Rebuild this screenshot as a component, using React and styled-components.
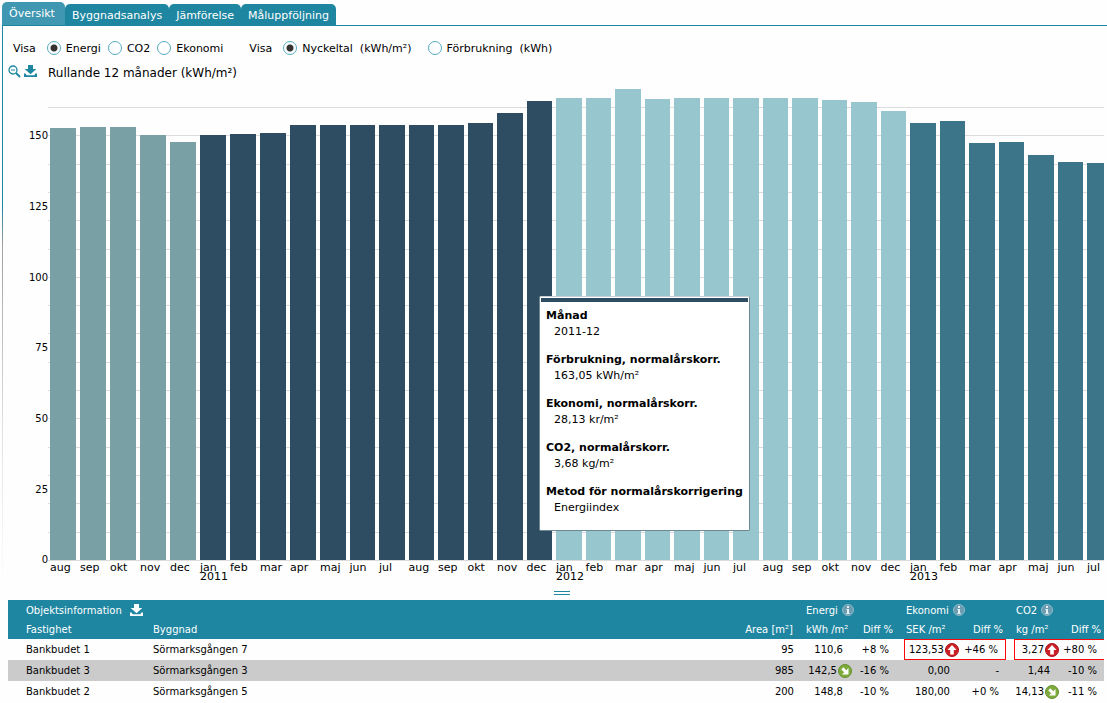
import React, { useState } from 'react';
import styled, { createGlobalStyle, css } from 'styled-components';

const colors = {
  teal: '#1e86a1',
  tealLight: '#3f97b1',
  y2010: '#78a0a5',
  y2011: '#2e4d62',
  y2012: '#98c6cf',
  y2013: '#3c758a',
  grid: '#dcdcdc',
  alert: '#fa0a0a',
};

const GlobalStyle = createGlobalStyle`
  * {
    box-sizing: border-box;
  }

  body {
    margin: 0;
    background: #fefefe;
    color: #000;
    font-family: Verdana, 'DejaVu Sans', sans-serif;
    font-size: 11px;
  }
`;

const Page = styled.div`
  padding-left: 2px;
`;

const Tabs = styled.nav`
  display: flex;
  align-items: flex-end;
  height: 25px;
`;

const Tab = styled.a`
  height: ${({ $active }) => ($active ? '23px' : '21px')};
  padding: 0 ${({ $active }) => ($active ? '10px' : '7px')} 0 7px;
  border-radius: 5px 5px 0 0;
  background: ${({ $active }) => ($active ? colors.tealLight : colors.teal)};
  color: #fff;
  line-height: 23px;
  text-decoration: none;
  white-space: nowrap;
`;

const Panel = styled.main`
  padding: 12px 3px 0 6px;
  border-top: 1px solid ${colors.teal};
  background: linear-gradient(
      to bottom,
      ${colors.teal} 180px,
      #a0a0a0 220px,
      #e0e0e0 400px,
      #fefefe 560px
    ) left top / 1px 100% no-repeat;
`;

const Controls = styled.div`
  display: flex;
  align-items: center;
  gap: 26px;
  padding-left: 5px;
`;

const RadioGroup = styled.fieldset`
  display: flex;
  align-items: center;
  gap: 11px;
  height: 20px;
  margin: 0;
  padding: 0;
  border: 0;
`;

const Options = styled.div`
  display: flex;
  gap: ${({ $wide }) => ($wide ? '16px' : '7px')};
`;

const RadioLabel = styled.label`
  display: flex;
  align-items: center;
  gap: 5px;
  white-space: pre;
`;

const Radio = styled.input`
  appearance: none;
  width: 14px;
  height: 14px;
  margin: 0;
  border: 1px solid #55a9c2;
  border-radius: 50%;
  background: #fff;

  &:checked {
    background: radial-gradient(circle, #333 3px, #fff 4px);
  }
`;

const TitleRow = styled.div`
  display: flex;
  align-items: center;
  height: 27px;
  padding-top: 2px;
`;

const IconButton = styled.button`
  display: inline-flex;
  margin: 0;
  padding: 0;
  border: 0;
  background: none;
  color: inherit;
  cursor: pointer;
`;

const TitleTools = styled.div`
  display: flex;
  gap: 3px;
  width: 40px;
  height: 16px;
  color: ${colors.teal};
`;

const ChartTitle = styled.h1`
  margin: 0;
  font-size: 12px;
  font-weight: normal;
`;

const Chart = styled.section`
  display: grid;
  grid-template-columns: 40px minmax(0, 1fr);
  grid-template-rows: 475px auto;
`;

const ValueAxis = styled.div`
  display: flex;
  flex-direction: column;
  justify-content: space-between;
  align-self: end;
  height: calc(100% * 150 / 168);
  font-size: 10px;
`;

const ValueLabel = styled.span`
  display: flex;
  align-items: center;
  justify-content: flex-end;
  height: 0;
`;

const Plot = styled.div`
  display: grid;
  position: relative;
  min-width: 0;

  > * {
    grid-area: 1 / 1;
  }
`;

const GridLines = styled.div`
  display: flex;
  flex-direction: column;
`;

const GridBand = styled.div`
  flex: ${({ $units }) => $units} 0 0;
  border-bottom: ${({ $line }) => ($line ? `1px solid ${colors.grid}` : '0')};
`;

const Clip = styled.div`
  min-width: 0;
  overflow: hidden;
`;

// the oldest months get slightly wider slots, the newest one runs off the edge
const Columns = styled.div`
  display: grid;
  grid-template-columns: repeat(9, minmax(0, 60fr)) repeat(27, minmax(0, 59fr));
  align-items: end;
  width: 101%;
  height: 100%;
`;

const BarSlot = styled.div`
  display: flex;
  align-items: flex-end;
  height: 100%;
  padding: 0 2px;
`;

const Bar = styled.div`
  width: 100%;
  background: ${({ $year }) => colors[`y${$year}`]};
`;

const MonthAxis = styled(Clip)`
  grid-column: 2;
  height: 27px;
  padding-top: 2px;
  border-top: 1px solid ${colors.grid};
`;

const Month = styled.div`
  height: 24px;
  padding-left: 2px;
  line-height: 9px;
  white-space: nowrap;
`;

const Tooltip = styled.dl`
  position: absolute;
  top: 211px;
  left: 46.5%;
  z-index: 1;
  margin: 0;
  padding: 1px;
  border: 1px solid #6d8793;
  border-top-color: #c5d0d5;
  border-radius: 2px;
  background: #fff;
  line-height: 16px;
  white-space: nowrap;

  &::before {
    content: '';
    display: block;
    height: 4px;
    background: ${colors.y2011};
  }
`;

const TooltipBody = styled.div`
  padding: 6px 5px 1px;
`;

const TooltipItem = styled.div`
  margin-bottom: 12px;

  dt {
    font-weight: bold;
  }

  dd {
    margin: 0 0 0 8px;
  }
`;

const Splitter = styled.div`
  width: 16px;
  height: 4px;
  margin: 4px 0 5px calc(50% - 2px);
  border: solid ${colors.teal};
  border-width: 1px 0;
`;

const Table = styled.table`
  width: 100%;
  border-collapse: separate;
  border-spacing: 0;
  table-layout: fixed;
  font-size: 10px;
  white-space: nowrap;
`;

const Head = styled.thead`
  background: ${colors.teal};
  color: #fff;
`;

const HeadCell = styled.th`
  height: ${({ $low }) => ($low ? '19px' : '20px')};
  padding: ${({ $first }) => ($first ? '0 0 0 18px' : $first === false ? '0' : '0 3px 0 2px')};
  font-weight: normal;
  text-align: ${({ $right }) => ($right ? 'right' : 'left')};
`;

const HeadGroup = styled.span`
  display: flex;
  align-items: center;
  gap: ${({ $gap }) => $gap || 4}px;
`;

const Row = styled.tr`
  background: ${({ $shaded }) => ($shaded ? '#cbcbcb' : 'transparent')};
`;

const alertEdge = `1px solid ${colors.alert}`;

const Cell = styled.td`
  height: 21px;
  padding: 0 ${({ $pad }) => $pad || 0}px 0 ${({ $first }) => ($first ? 18 : 0)}px;
  text-align: ${({ $right }) => ($right ? 'right' : 'left')};

  ${({ $alert }) => $alert && css`
    border-top: ${alertEdge};
    border-bottom: ${alertEdge};
  `}
  ${({ $alert }) => $alert === 'start' && css`
    border-left: ${alertEdge};
  `}
  ${({ $alert }) => $alert === 'end' && css`
    border-right: ${alertEdge};
  `}
`;

const Value = styled.span`
  display: flex;
  align-items: center;
  justify-content: flex-end;
  gap: 1px;
`;

const ZoomOutIcon = () => (
  <svg width="13" height="13" viewBox="0 0 13 13" fill="none" stroke="currentColor">
    <circle cx="5" cy="5" r="4" strokeWidth="1.3" />
    <path d="M3 5h4" />
    <path d="M8 8l4 4" strokeWidth="2" />
  </svg>
);

const DownloadIcon = () => (
  <svg width="13" height="13" viewBox="0 0 13 13" fill="currentColor">
    <path d="M4 0h5v4h3.300L6.500 9.300.7 4H4z" />
    <path d="M0 8.500h1.500l1.200 1.700h7.600l1.200-1.700H13V12H0z" />
  </svg>
);

const InfoIcon = () => (
  <svg width="12" height="12" viewBox="0 0 12 12">
    <circle cx="6" cy="6" r="5.500" fill="#6b9cb0" stroke="#8bb9c9" />
    <path d="M5 2h2v2H5zM4.500 5H7v4h.8v1H4.200V9H5V6h-.5z" fill="#e3f0f4" />
  </svg>
);

const UpIcon = () => (
  <svg width="14" height="14" viewBox="0 0 14 14">
    <circle cx="7" cy="7" r="6.500" fill="#cc2027" stroke="#a5151b" />
    <path d="M7 2l4.500 5H8.800v4.500H5.200V7H2.500z" fill="#fff" />
  </svg>
);

const DownIcon = () => (
  <svg width="14" height="14" viewBox="0 0 14 14">
    <circle cx="7" cy="7" r="6.500" fill="#7eaa3c" stroke="#64902b" />
    <path d="M10.500 4v6.500H4l2.200-2.200L3.300 5.400l2.100-2.100 2.900 2.900z" fill="#fff" />
  </svg>
);

const MAX = 168;
const names = ['jan', 'feb', 'mar', 'apr', 'maj', 'jun', 'jul', 'aug', 'sep', 'okt', 'nov', 'dec'];

const series = [
  { year: 2010, from: 7, values: [152.8, 153.2, 153.2, 150.4, 147.9] },
  { year: 2011, from: 0, values: [150.4, 150.7, 151.1, 153.9, 153.9, 153.9, 153.9, 153.9, 153.9, 154.6, 158.1, 162.4] },
  { year: 2012, from: 0, values: [163.4, 163.4, 166.6, 163.1, 163.4, 163.4, 163.4, 163.4, 163.4, 162.7, 162, 158.8] },
  { year: 2013, from: 0, values: [154.6, 155.3, 147.5, 147.9, 143.3, 140.8, 140.4] },
];

const months = series.flatMap(({ year, from, values }) =>
  values.map((value, i) => ({ year, value, name: names[from + i], isFirst: from + i === 0 }))
);

const tooltip = [
  ['Månad', '2011-12'],
  ['Förbrukning, normalårskorr.', '163,05 kWh/m²'],
  ['Ekonomi, normalårskorr.', '28,13 kr/m²'],
  ['CO2, normalårskorr.', '3,68 kg/m²'],
  ['Metod för normalårskorrigering', 'Energiindex'],
];

const objects = [
  {
    property: 'Bankbudet 1',
    building: 'Sörmarksgången 7',
    area: '95',
    energy: { value: '110,6', diff: '+8 %' },
    economy: { value: '123,53', diff: '+46 %', trend: 'up' },
    co2: { value: '3,27', diff: '+80 %', trend: 'up' },
  },
  {
    property: 'Bankbudet 3',
    building: 'Sörmarksgången 3',
    area: '985',
    energy: { value: '142,5', diff: '-16 %', trend: 'down' },
    economy: { value: '0,00', diff: '-' },
    co2: { value: '1,44', diff: '-10 %' },
  },
  {
    property: 'Bankbudet 2',
    building: 'Sörmarksgången 5',
    area: '200',
    energy: { value: '148,8', diff: '-10 %' },
    economy: { value: '180,00', diff: '+0 %' },
    co2: { value: '14,13', diff: '-11 %', trend: 'down' },
  },
];

const Option = ({ name, value, current, onChange, children }) => (
  <RadioLabel>
    <Radio
      type="radio"
      name={name}
      checked={current === value}
      onChange={() => onChange(value)}
    />
    {children}
  </RadioLabel>
);

const Measure = ({ data, last }) => (
  <>
    <Cell />
    <Cell $right $pad={data.trend ? 3 : 12} $alert={data.trend === 'up' && 'start'}>
      <Value>
        {data.value}
        {data.trend === 'up' && <UpIcon />}
        {data.trend === 'down' && <DownIcon />}
      </Value>
    </Cell>
    <Cell $right $pad={7} $alert={data.trend === 'up' && (last ? 'middle' : 'end')}>
      {data.diff}
    </Cell>
  </>
);

const EnergyChart = () => (
  <Chart>
    <ValueAxis>
      {[150, 125, 100, 75, 50, 25, 0].map((v) => (
        <ValueLabel key={v}>{v}</ValueLabel>
      ))}
    </ValueAxis>
    <Plot>
      <GridLines>
        <GridBand $units={8} $line />
        {Array.from({ length: 16 }, (_, i) => (
          <GridBand key={i} $units={10} $line={i < 15} />
        ))}
      </GridLines>
      <Clip>
        <Columns>
          {months.map((m) => (
            <BarSlot key={`${m.year}-${m.name}`}>
              <Bar $year={m.year} style={{ height: `${(m.value / MAX) * 100}%` }} />
            </BarSlot>
          ))}
        </Columns>
      </Clip>
      <Tooltip>
        <TooltipBody>
          {tooltip.map(([term, text]) => (
            <TooltipItem key={term}>
              <dt>{term}</dt>
              <dd>{text}</dd>
            </TooltipItem>
          ))}
        </TooltipBody>
      </Tooltip>
    </Plot>
    <MonthAxis>
      <Columns>
        {months.map((m) => (
          <Month key={`${m.year}-${m.name}`}>
            <div>{m.name}</div>
            {m.isFirst && <div>{m.year}</div>}
          </Month>
        ))}
      </Columns>
    </MonthAxis>
  </Chart>
);

const ObjectTable = () => (
  <Table>
    <colgroup>
      <col style={{ width: 145 }} />
      <col />
      <col style={{ width: 64 }} />
      {[51, 58, 48].map((width, i) => (
        <React.Fragment key={width}>
          <col style={{ width: 8 }} />
          <col style={{ width }} />
          <col style={{ width: [41, 44, 42][i] }} />
        </React.Fragment>
      ))}
    </colgroup>
    <Head>
      <tr>
        <HeadCell $first colSpan={3}>
          <HeadGroup $gap={8}>
            Objektsinformation
            <IconButton aria-label="Ladda ner tabell">
              <DownloadIcon />
            </IconButton>
          </HeadGroup>
        </HeadCell>
        {['Energi', 'Ekonomi', 'CO2'].map((title) => (
          <React.Fragment key={title}>
            <HeadCell $first={false} />
            <HeadCell colSpan={2}>
              <HeadGroup>
                {title}
                <InfoIcon />
              </HeadGroup>
            </HeadCell>
          </React.Fragment>
        ))}
      </tr>
      <tr>
        <HeadCell $low $first>Fastighet</HeadCell>
        <HeadCell $low $first={false}>Byggnad</HeadCell>
        <HeadCell $low $right>Area [m²]</HeadCell>
        {['kWh /m²', 'SEK /m²', 'kg /m²'].map((unit) => (
          <React.Fragment key={unit}>
            <HeadCell $low $first={false} />
            <HeadCell $low>{unit}</HeadCell>
            <HeadCell $low $right>Diff %</HeadCell>
          </React.Fragment>
        ))}
      </tr>
    </Head>
    <tbody>
      {objects.map((o, i) => (
        <Row key={o.property} $shaded={i % 2 === 1}>
          <Cell $first>{o.property}</Cell>
          <Cell>{o.building}</Cell>
          <Cell $right $pad={2}>{o.area}</Cell>
          <Measure data={o.energy} />
          <Measure data={o.economy} />
          <Measure data={o.co2} last />
        </Row>
      ))}
    </tbody>
  </Table>
);

const App = () => {
  const [kind, setKind] = useState('energi');
  const [unit, setUnit] = useState('nyckeltal');

  return (
    <Page>
      <GlobalStyle />
      <Tabs>
        <Tab href="#oversikt" $active>Översikt</Tab>
        <Tab href="#byggnadsanalys">Byggnadsanalys</Tab>
        <Tab href="#jamforelse">Jämförelse</Tab>
        <Tab href="#maluppfoljning">Måluppföljning</Tab>
      </Tabs>
      <Panel>
        <Controls>
          <RadioGroup aria-label="Visa">
            <span>Visa</span>
            <Options>
              <Option name="kind" value="energi" current={kind} onChange={setKind}>Energi</Option>
              <Option name="kind" value="co2" current={kind} onChange={setKind}>CO2</Option>
              <Option name="kind" value="ekonomi" current={kind} onChange={setKind}>Ekonomi</Option>
            </Options>
          </RadioGroup>
          <RadioGroup aria-label="Visa enhet">
            <span>Visa</span>
            <Options $wide>
              <Option name="unit" value="nyckeltal" current={unit} onChange={setUnit}>
                {'Nyckeltal  (kWh/m²)'}
              </Option>
              <Option name="unit" value="forbrukning" current={unit} onChange={setUnit}>
                {'Förbrukning  (kWh)'}
              </Option>
            </Options>
          </RadioGroup>
        </Controls>
        <TitleRow>
          <TitleTools>
            <IconButton aria-label="Zooma ut">
              <ZoomOutIcon />
            </IconButton>
            <IconButton aria-label="Ladda ner diagram">
              <DownloadIcon />
            </IconButton>
          </TitleTools>
          <ChartTitle>Rullande 12 månader (kWh/m²)</ChartTitle>
        </TitleRow>
        <EnergyChart />
        <Splitter />
        <ObjectTable />
      </Panel>
    </Page>
  );
};

export default App;
